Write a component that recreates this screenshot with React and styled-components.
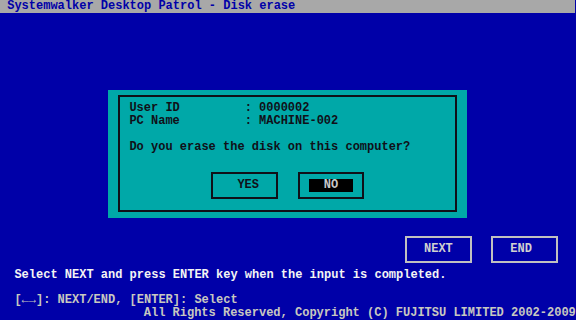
import styled, { createGlobalStyle } from "styled-components"

// text-mode screen: 80 x 25 cells of 7.2 x 12.8 px
const GlobalStyle = createGlobalStyle`
    html, body {
        margin: 0;
        padding: 0;
        background: #0000a8;
    }
`

const Screen = styled.div`
    width: 576px;
    height: 320px;
    overflow: hidden;
    display: grid;
    grid-template-columns: repeat(80, 7.2px);
    grid-template-rows: repeat(25, 12.8px);
    background: #0000a8;
    font-family: "Liberation Mono", "DejaVu Sans Mono", monospace;
    font-size: 12px;
    font-weight: bold;
    line-height: 12.8px;
    white-space: pre;
`

const TitleBar = styled.div`
    grid-row: 1;
    grid-column: 1 / -1;
    background: #a8a8a8;
    color: #0000a8;
    padding-left: 7.2px;
`

const Dialog = styled.div`
    grid-row: 8 / 18;
    grid-column: 16 / 66;
    background: #00a8a8;
    padding: 5.4px 9.8px;
    box-sizing: border-box;
`

const Frame = styled.div`
    height: 100%;
    box-sizing: border-box;
    border: 2px solid #101018;
    padding: 5.4px 9.8px;
    color: #101018;
`

const Line = styled.div`
    height: 12.8px;
`

const Question = styled.div`
    margin: 12.8px 0;
`

const ButtonRow = styled.div`
    display: flex;
    gap: 19.6px;
    padding-top: 5.4px;
    margin-left: 81.8px;
`

const Button = styled.div`
    width: 66.8px;
    height: 27.6px;
    box-sizing: border-box;
    display: flex;
    align-items: center;
    justify-content: center;
    border: 2px solid ${p => (p.$light ? "#c0c0c0" : "#101018")};
    color: ${p => (p.$light ? "#d0d0d0" : "#101018")};
`

const Highlight = styled.span`
    background: #000000;
    color: #c8c8c8;
`

const ScreenButtons = styled.div`
    grid-row: 19 / 22;
    grid-column: 57 / 79;
    display: flex;
    gap: 19.6px;
    padding: 5.4px 2.6px;
`

const Message = styled.div`
    grid-row: ${p => p.$row};
    grid-column: ${p => p.$col} / -1;
    color: ${p => (p.$dim ? "#c8c8c0" : "#f4f4f4")};
`

function App() {
  return (
    <>
      <GlobalStyle />
      <Screen>
        <TitleBar>Systemwalker Desktop Patrol - Disk erase</TitleBar>
        <Dialog>
          <Frame>
            <Line>{"User ID         : 0000002"}</Line>
            <Line>{"PC Name         : MACHINE-002"}</Line>
            <Question>Do you erase the disk on this computer?</Question>
            <ButtonRow>
              <Button>{" YES"}</Button>
              <Button><Highlight>{"  NO  "}</Highlight></Button>
            </ButtonRow>
          </Frame>
        </Dialog>
        <ScreenButtons>
          <Button $light>NEXT</Button>
          <Button $light>{"END "}</Button>
        </ScreenButtons>
        <Message $row={22} $col={3}>
          Select NEXT and press ENTER key when the input is completed.
        </Message>
        <Message $row={24} $col={3} $dim>
          {"[\u2190\u2192]: NEXT/END, [ENTER]: Select"}
        </Message>
        <Message $row={25} $col={21} $dim>
          All Rights Reserved, Copyright (C) FUJITSU LIMITED 2002-2009
        </Message>
      </Screen>
    </>
  )
}

export default App
